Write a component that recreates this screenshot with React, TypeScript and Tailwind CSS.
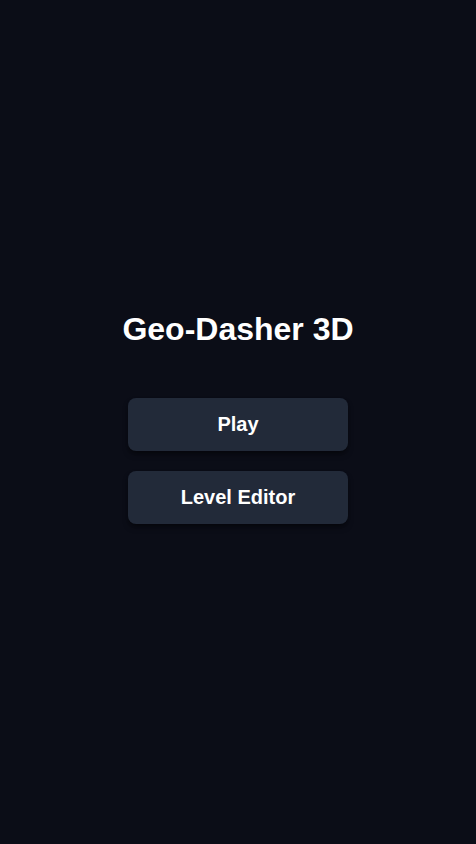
export default function App() {
  return (
    <div
      className="min-h-screen w-full bg-[#0b0d17] flex flex-col items-center justify-center pb-[12px]"
      style={{ fontFamily: '"Liberation Sans", Arial, sans-serif' }}
    >
      <h1 className="text-[32px] leading-[40px] font-bold text-white mb-[49px]">Geo-Dasher 3D</h1>
      <div className="flex flex-col gap-5">
        <button
          type="button"
          className="w-[220px] h-[53px] rounded-lg bg-[#222a39] text-white text-xl font-bold shadow-md shadow-black/40"
        >
          Play
        </button>
        <button
          type="button"
          className="w-[220px] h-[53px] rounded-lg bg-[#222a39] text-white text-xl font-bold shadow-md shadow-black/40"
        >
          Level Editor
        </button>
      </div>
    </div>
  );
}
